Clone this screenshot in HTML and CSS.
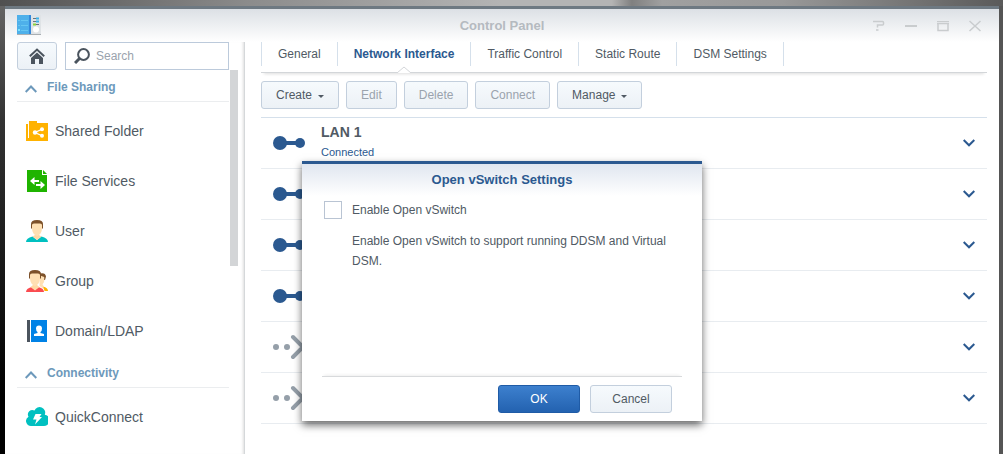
FILE: index.html
```html
<!DOCTYPE html>
<html lang="en">
<head>
    <meta charset="UTF-8">
    <title>Control Panel</title>
    <link rel="stylesheet" href="styles.css">
</head>
<body>
    <div class="window">
        <header class="titlebar">
            <svg class="app-icon" width="24" height="22" viewBox="0 0 24 22">
                <path d="M0 19h24v1H0z" fill="#a9afb3"/>
                <path d="M14 0h10v19H14z" fill="#dfe3e6"/>
                <path d="M0 0h14v19H0z" fill="#4eb0ea"/>
                <path d="M12 0h2v19h-2z" fill="#3389db"/>
                <path d="M1 5.500h2M4 5.500h7M1 10.500h2M4 10.500h7M4 15.500h7" stroke="#66c6f2"/>
                <path d="M1 14h2v2H1z" fill="#7ce3fb"/>
                <path d="M16 3.500h3M20 6.500h2M16 6.500h3M19 9.500h3" stroke="#68737c"/>
                <path d="M19 3.500h3M19 6.500h3" stroke="#3bb3ea" stroke-width="2"/>
                <path d="M16 9.500h3" stroke="#8ad53e" stroke-width="2"/>
                <circle cx="19" cy="14.500" r="3" fill="#fff"/>
            </svg>
            <h1>Control Panel</h1>
            <div class="window-controls">
                <button aria-label="Help">
                    <svg width="12" height="12" viewBox="0 0 12 12"><path d="M0 1.500h9.500q1 0 1 1v1.500q0 1-1 1H4.500v2.500M3 10h2.500" fill="none" stroke="currentColor" stroke-width="1.500"/></svg>
                </button>
                <button aria-label="Minimize">
                    <svg width="12" height="12" viewBox="0 0 12 12"><path d="M0 6h12" stroke="currentColor" stroke-width="2"/></svg>
                </button>
                <button aria-label="Maximize">
                    <svg width="12" height="12" viewBox="0 0 12 12"><path d="M0 1.500h12" stroke="currentColor"/><path d="M1 4v6.500h10V4M0 3.500h12" fill="none" stroke="currentColor" stroke-width="1.500"/></svg>
                </button>
                <button aria-label="Close">
                    <svg width="12" height="12" viewBox="0 0 12 12"><path d="M.5 1l11 10M11.500 1L.5 11" stroke="currentColor" stroke-width="1.500"/></svg>
                </button>
            </div>
        </header>

        <div class="content">
            <aside class="sidebar">
                <div class="sidebar-top">
                    <button class="btn home" aria-label="Home">
                        <svg width="16" height="16" viewBox="0 0 16 16">
                            <path d="M.8 8.200L8 1.500l7.200 6.700" fill="none" stroke="#4b545e" stroke-width="2"/>
                            <path d="M2 10l6-5.500L14 10v6h-4v-5H6v5H2z" fill="#4b545e"/>
                        </svg>
                    </button>
                    <div class="search">
                        <svg width="16" height="16" viewBox="0 0 16 16">
                            <circle cx="9.500" cy="6.500" r="5.400" fill="none" stroke="#4b545e" stroke-width="2"/>
                            <path d="M5.500 10.500L1 15" stroke="#4b545e" stroke-width="3"/>
                        </svg>
                        <input type="text" placeholder="Search" aria-label="Search">
                    </div>
                </div>
                <div class="sidebar-body">
                    <nav>
                        <h2>
                            <svg width="12" height="8" viewBox="0 0 12 8"><path d="M.7 7L6 1.500 11.300 7" fill="none" stroke="currentColor" stroke-width="2"/></svg>
                            File Sharing
                        </h2>
                        <a href="#">
                            <svg width="22" height="22" viewBox="0 0 22 22">
                                <path d="M0 4h2v14h1v2H0zM3 1h8v2h11v18H0v-2h3z" fill="#ffb200"/>
                                <path d="M16.500 9L9 12.500l7.500 3.500" fill="none" stroke="#fff" stroke-width="1.300"/>
                                <circle cx="9" cy="12.500" r="2.200" fill="#fff"/>
                                <circle cx="16" cy="9.200" r="2" fill="#fff"/>
                                <circle cx="16" cy="15.800" r="2" fill="#fff"/>
                            </svg>
                            Shared Folder
                        </a>
                        <a href="#">
                            <svg width="22" height="22" viewBox="0 0 22 22">
                                <path d="M1 0h15v5h5v17H1z" fill="#1fb400"/>
                                <path d="M17 0l4 4h-4z" fill="#1fb400"/>
                                <path d="M4 11l4.500-4v3H13v2H8.500v3zM19 15l-4.500-4v3H10v2h4.500v3z" fill="#fff"/>
                            </svg>
                            File Services
                        </a>
                        <a href="#">
                            <svg width="22" height="22" viewBox="0 0 22 22">
                                <path d="M0 22q0-4 6.500-5.500L11 20l4.500-3.500Q22 18 22 22z" fill="#00c0c0"/>
                                <path d="M9 12h4v3l2.500 1.500L11 20l-4.500-3.500L9 15z" fill="#ffd9a5"/>
                                <path d="M6 3h10v5q0 4.500-3 7l-2 1-2-1Q6 12.500 6 8z" fill="#ffe0b3"/>
                                <path d="M5 8V4q0-4 6-4t6 4v4l-1 1V5q0-1.500-2-1.500H8Q6 3.500 6 5v4z" fill="#7d5129"/>
                            </svg>
                            User
                        </a>
                        <a href="#">
                            <svg width="22" height="22" viewBox="0 0 22 22">
                                <path d="M17 16.500q5 1 5 4.500h-3.500q0-2.500-2.500-4z" fill="#ffb200"/>
                                <path d="M14 6h4.500v3q0 3.500-2 5.500l1.500 2-1 2-3.500-2.500z" fill="#ffe0b3"/>
                                <path d="M13.500 3.500q6-1.500 6.500 3L19 10h-.8V7L14 5.500z" fill="#7d5129"/>
                                <path d="M0 22q0-3.500 5.500-5L9 20l3.500-3q5.500 1.500 5.500 5z" fill="#fa4b50"/>
                                <path d="M7 12h4v3l2.500 2L9 20.500 4.500 17 7 15z" fill="#ffd9a5"/>
                                <path d="M4 3h10v5q0 4.500-3 7l-2 1-2-1Q4 12.500 4 8z" fill="#ffe0b3"/>
                                <path d="M3 8V4q0-4 6-4t6 4v4l-1 1V5q0-1.500-2-1.500H6Q4 3.500 4 5v4z" fill="#7d5129"/>
                            </svg>
                            Group
                        </a>
                        <a href="#">
                            <svg width="22" height="22" viewBox="0 0 22 22">
                                <path d="M1 0h3v22H1z" fill="#4b545e"/>
                                <path d="M5 0h16v22H5z" fill="#0082e6"/>
                                <path d="M10 8.500a3 3 0 0 1 6 0q0 2.500-1.500 3.500v1l3.500 1v2H8v-2l3.500-1v-1Q10 11 10 8.500z" fill="#fff"/>
                            </svg>
                            Domain/LDAP
                        </a>
                        <h2>
                            <svg width="12" height="8" viewBox="0 0 12 8"><path d="M.7 7L6 1.500 11.300 7" fill="none" stroke="currentColor" stroke-width="2"/></svg>
                            Connectivity
                        </h2>
                        <a href="#">
                            <svg width="22" height="22" viewBox="0 0 22 22">
                                <path d="M5 20a5 5 0 0 1-2.500-9.300A4.500 4.500 0 0 1 8.500 4.500a5.500 5.500 0 0 1 10.300 4.200A5.700 5.700 0 0 1 17 20z" fill="#00c0c0"/>
                                <path d="M9.500 8h6l-2 3H16l-7 7.500 1.500-5H7z" fill="#fff"/>
                            </svg>
                            QuickConnect
                        </a>
                    </nav>
                    <div class="scroll-thumb"></div>
                </div>
            </aside>

            <main>
                <nav class="tabs">
                    <a href="#">General</a>
                    <a href="#" class="active">Network Interface
                        <svg class="tab-arrow" width="14" height="7" viewBox="0 0 14 7"><path d="M0 7l7-6 7 6" fill="#fff" stroke="#d3d6d9"/></svg>
                    </a>
                    <a href="#">Traffic Control</a>
                    <a href="#">Static Route</a>
                    <a href="#">DSM Settings</a>
                </nav>
                <div class="toolbar">
                    <button class="btn">Create <span class="caret"></span></button>
                    <button class="btn" disabled>Edit</button>
                    <button class="btn" disabled>Delete</button>
                    <button class="btn" disabled>Connect</button>
                    <button class="btn">Manage <span class="caret"></span></button>
                </div>
                <ul class="interfaces">
                    <li>
                        <svg class="link-icon" width="32" height="26" viewBox="0 0 32 26"><path d="M7 13h20" stroke="#2b5990" stroke-width="4"/><circle cx="7" cy="13" r="7" fill="#2b5990"/><circle cx="27" cy="13" r="5" fill="#2b5990"/></svg>
                        <div class="info">
                            <strong>LAN 1</strong>
                            <span>Connected</span>
                        </div>
                        <button class="expand" aria-label="Expand"><svg width="12" height="8" viewBox="0 0 12 8"><path d="M.7 1L6 6.300 11.300 1" fill="none" stroke="#2b5990" stroke-width="2"/></svg></button>
                    </li>
                    <li>
                        <svg class="link-icon" width="32" height="26" viewBox="0 0 32 26"><path d="M7 13h20" stroke="#2b5990" stroke-width="4"/><circle cx="7" cy="13" r="7" fill="#2b5990"/><circle cx="27" cy="13" r="5" fill="#2b5990"/></svg>
                        <button class="expand" aria-label="Expand"><svg width="12" height="8" viewBox="0 0 12 8"><path d="M.7 1L6 6.300 11.300 1" fill="none" stroke="#2b5990" stroke-width="2"/></svg></button>
                    </li>
                    <li>
                        <svg class="link-icon" width="32" height="26" viewBox="0 0 32 26"><path d="M7 13h20" stroke="#2b5990" stroke-width="4"/><circle cx="7" cy="13" r="7" fill="#2b5990"/><circle cx="27" cy="13" r="5" fill="#2b5990"/></svg>
                        <button class="expand" aria-label="Expand"><svg width="12" height="8" viewBox="0 0 12 8"><path d="M.7 1L6 6.300 11.300 1" fill="none" stroke="#2b5990" stroke-width="2"/></svg></button>
                    </li>
                    <li>
                        <svg class="link-icon" width="32" height="26" viewBox="0 0 32 26"><path d="M7 13h20" stroke="#2b5990" stroke-width="4"/><circle cx="7" cy="13" r="7" fill="#2b5990"/><circle cx="27" cy="13" r="5" fill="#2b5990"/></svg>
                        <button class="expand" aria-label="Expand"><svg width="12" height="8" viewBox="0 0 12 8"><path d="M.7 1L6 6.300 11.300 1" fill="none" stroke="#2b5990" stroke-width="2"/></svg></button>
                    </li>
                    <li>
                        <svg class="link-icon" width="32" height="26" viewBox="0 0 32 26"><circle cx="3" cy="13" r="3" fill="#959fa9"/><circle cx="14" cy="13" r="3" fill="#959fa9"/><path d="M20 3l10 10-10 10" fill="none" stroke="#959fa9" stroke-width="4" stroke-linecap="round"/></svg>
                        <button class="expand" aria-label="Expand"><svg width="12" height="8" viewBox="0 0 12 8"><path d="M.7 1L6 6.300 11.300 1" fill="none" stroke="#2b5990" stroke-width="2"/></svg></button>
                    </li>
                    <li>
                        <svg class="link-icon" width="32" height="26" viewBox="0 0 32 26"><circle cx="3" cy="13" r="3" fill="#959fa9"/><circle cx="14" cy="13" r="3" fill="#959fa9"/><path d="M20 3l10 10-10 10" fill="none" stroke="#959fa9" stroke-width="4" stroke-linecap="round"/></svg>
                        <button class="expand" aria-label="Expand"><svg width="12" height="8" viewBox="0 0 12 8"><path d="M.7 1L6 6.300 11.300 1" fill="none" stroke="#2b5990" stroke-width="2"/></svg></button>
                    </li>
                </ul>
            </main>
        </div>

        <div class="overlay">
            <div class="dialog" role="dialog" aria-labelledby="dialog-title">
                <h2 id="dialog-title">Open vSwitch Settings</h2>
                <div class="dialog-body">
                    <label for="vswitch"><input type="checkbox" id="vswitch">Enable Open vSwitch</label>
                    <p>Enable Open vSwitch to support running DDSM and Virtual DSM.</p>
                </div>
                <div class="dialog-footer">
                    <button class="btn primary">OK</button>
                    <button class="btn">Cancel</button>
                </div>
            </div>
        </div>
    </div>
</body>
</html>
```
FILE: styles.css
```css
* {
    box-sizing: border-box;
}

body {
    margin: 0;
    padding: 6px 4px 0 5px;
    height: 100vh;
    overflow: hidden;
    font-family: "Liberation Sans", Arial, sans-serif;
    font-size: 12px;
    color: #505a64;
    background: linear-gradient(to right, transparent 50%, #555 60%), linear-gradient(#666, #444 78px, #333 120px, #000 400px);
}

body::before {
    content: "";
    position: absolute;
    top: 0;
    left: 0;
    right: 0;
    height: 6px;
    background: linear-gradient(to right, #505050, #8c8c8c 25%, #b4b4b4 50%, #b4b4b4 61%, #808080 63%, #a0a0a0 66%, #999 78%, #5a5a5a);
}

h1, h2, p, ul {
    margin: 0;
    padding: 0;
}

button, input {
    font: inherit;
    color: inherit;
}

a {
    color: inherit;
    text-decoration: none;
}

svg {
    display: block;
    flex: none;
}

.window {
    position: relative;
    display: flex;
    flex-direction: column;
    height: 100%;
    background: #fff;
    border-top: 3px solid #6e7982;
}

.titlebar {
    display: grid;
    grid-template-columns: 1fr auto 1fr;
    align-items: center;
    height: 33px;
    flex: none;
    padding: 0 12px;
    background: linear-gradient(#dce0e5, #fff);
}

.titlebar h1 {
    font-size: 13px;
    color: #b5bac0;
}

.window-controls {
    display: flex;
    justify-content: flex-end;
    gap: 8px;
}

.window-controls button {
    display: flex;
    justify-content: center;
    align-items: center;
    width: 24px;
    height: 24px;
    padding: 0;
    border: none;
    background: none;
    color: #c9ccce;
}

.content {
    display: flex;
    flex: 1;
    min-height: 0;
}

/* sidebar */
.sidebar {
    width: 240px;
    flex: none;
    padding-left: 12px;
    border-right: 1px solid #d5d8da;
    box-shadow: inset -3px 0 3px -2px #ddd;
    overflow: hidden;
}

.sidebar-top {
    display: flex;
    gap: 8px;
    padding-right: 15px;
}

.btn {
    display: inline-flex;
    justify-content: center;
    align-items: center;
    height: 28px;
    padding: 0 14px;
    border: 1px solid #c3cfdd;
    border-radius: 3px;
    background: linear-gradient(#f6fafd, #ecf1f6);
}

.btn:disabled {
    color: #9aa3ad;
}

.btn.home {
    width: 40px;
    padding: 0;
}

.search {
    display: flex;
    align-items: center;
    gap: 6px;
    flex: 1;
    height: 28px;
    padding: 0 8px;
    border: 1px solid #bccadb;
}

.search input {
    width: 100%;
    min-width: 0;
    padding: 0;
    border: none;
    outline: none;
    background: none;
}

.search input::placeholder {
    color: #9aa3ad;
}

.sidebar-body {
    display: flex;
    gap: 1px;
}

.sidebar-body nav {
    width: 212px;
}

.sidebar h2 {
    display: flex;
    align-items: center;
    gap: 10px;
    height: 32px;
    margin-bottom: 4px;
    padding: 2px 8px 0;
    border-bottom: 1px solid #ebedef;
    font-size: 12px;
    color: #6d99bb;
}

.sidebar h2 svg {
    margin-top: 4px;
}

.sidebar nav a {
    display: flex;
    align-items: center;
    gap: 7px;
    height: 50px;
    padding-left: 9px;
    font-size: 14px;
}

.scroll-thumb {
    width: 8px;
    height: 196px;
    background: #d3d5d7;
}

/* main panel */
main {
    flex: 1;
    min-width: 0;
    padding: 0 12px 0 16px;
}

.tabs {
    display: flex;
    height: 31px;
    border-bottom: 1px solid #d3d6d9;
    box-shadow: 0 4px 3px -3px #ddd;
}

.tabs a {
    position: relative;
    height: 24px;
    padding: 0 16px;
    line-height: 24px;
    border-right: 1px solid #d5e0eb;
}

.tabs a:first-child {
    border-left: 1px solid #d5e0eb;
}

.tabs .active {
    font-weight: bold;
    color: #2b5990;
}

.tab-arrow {
    position: absolute;
    bottom: -7px;
    left: calc(50% - 7px);
}

.toolbar {
    display: flex;
    gap: 7px;
    padding: 8px 0;
}

.caret {
    margin: 3px 0 0 6px;
    border: 3px solid transparent;
    border-top-color: #505a64;
    border-bottom: none;
}

.interfaces {
    list-style: none;
    border-top: 1px solid #d5e0eb;
}

.interfaces li {
    display: flex;
    align-items: center;
    gap: 16px;
    height: 51px;
    padding: 0 12px;
    border-bottom: 1px solid #e8ecf0;
}

.info {
    display: flex;
    flex-direction: column;
    gap: 4px;
    padding-bottom: 4px;
}

.info strong {
    font-size: 14px;
    line-height: 18px;
}

.info span {
    font-size: 11px;
    line-height: 14px;
    color: #2b5990;
}

.expand {
    margin-left: auto;
    padding: 0;
    border: none;
    background: none;
}

/* dialog */
.overlay {
    position: absolute;
    inset: 0;
    display: flex;
    justify-content: center;
    align-items: flex-start;
    padding-top: 152px;
}

.dialog {
    width: 400px;
    background: #fff;
    border-top: 3px solid #2b5990;
    box-shadow: 0 4px 8px rgba(0, 0, 0, 0.6);
}

.dialog h2 {
    height: 32px;
    line-height: 32px;
    text-align: center;
    font-size: 13px;
    color: #2b5990;
    background: linear-gradient(#e0e6ef, #fff);
}

.dialog-body {
    min-height: 180px;
    padding: 0 22px;
}

.dialog label {
    display: flex;
    align-items: center;
    gap: 10px;
    height: 28px;
}

.dialog input {
    appearance: none;
    width: 18px;
    height: 18px;
    margin: 0;
    border: 1px solid #b9c4d3;
    background: #fff;
}

.dialog input:checked {
    background: #2b5990;
    box-shadow: inset 0 0 0 3px #fff;
}

.dialog p {
    margin-top: 7px;
    padding-left: 28px;
    line-height: 20px;
}

.dialog-footer {
    display: flex;
    justify-content: flex-end;
    gap: 10px;
    margin: 0 20px;
    padding: 8px 10px;
    border-top: 1px solid #d8dadc;
    box-shadow: 0 -3px 3px -2px #eee;
}

.dialog-footer .btn {
    width: 82px;
}

.btn.primary {
    color: #fff;
    border-color: #1f5ba6;
    background: linear-gradient(#3d80ce, #2362b0);
}
```
